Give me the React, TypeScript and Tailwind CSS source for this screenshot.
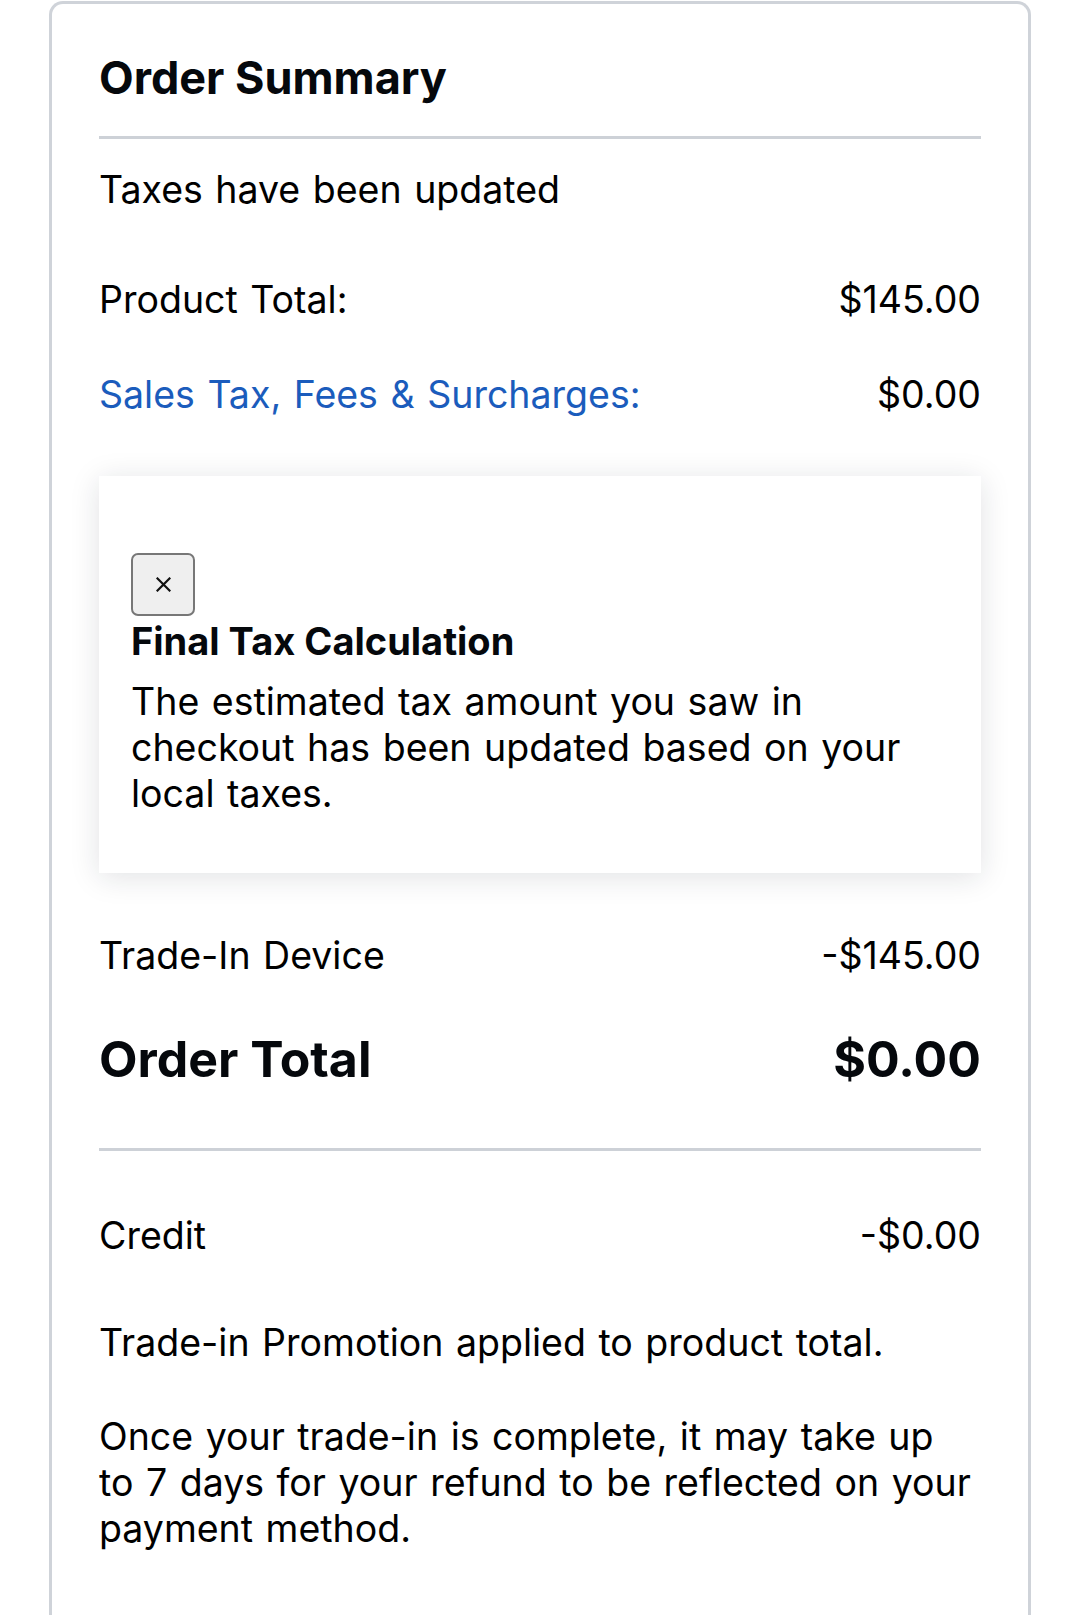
import { ReactNode } from "react";

interface RowProps {
  label: ReactNode;
  value: string;
  className?: string;
}

function Row({ label, value, className = "" }: RowProps) {
  return (
    <div className={`flex items-center justify-between text-[37.5px] leading-[46px] text-black ${className}`}>
      <span>{label}</span>
      <span>{value}</span>
    </div>
  );
}

function CloseIcon() {
  return (
    <svg width="15" height="15" viewBox="0 0 15 15" fill="none">
      <path d="M1.5 1.5L13.5 13.5M13.5 1.5L1.5 13.5" stroke="#111" strokeWidth="2.2" strokeLinecap="square" />
    </svg>
  );
}

export default function App() {
  return (
    <div className="min-h-screen bg-white font-['Inter',sans-serif] overflow-hidden">
      <div className="ml-[49px] mt-[1px] w-[982px] rounded-t-[14px] border-[3px] border-b-0 border-[#cfd3d9] bg-white px-[47px] pt-[46px] pb-[120px] [word-spacing:2px]">
        <h2 className="text-[45px] leading-[56px] font-bold text-[#05080c] [word-spacing:0px]">Order Summary</h2>
        <div className="mt-[30px] h-[3px] bg-[#cdd1d7]" />

        <p className="mt-[28px] text-[37.5px] leading-[46px] text-black">Taxes have been updated</p>

        <Row className="mt-[64px]" label="Product Total:" value="$145.00" />
        <Row
          className="mt-[49px]"
          label={<span className="text-[#1b5cbc]">Sales Tax, Fees &amp; Surcharges:</span>}
          value="$0.00"
        />

        <div className="mt-[58px] bg-white pl-[32px] pr-[48px] pt-[77px] pb-[56px] shadow-[0_4px_28px_rgba(20,30,50,0.13)]">
          <button className="flex h-[63px] w-[64px] items-center justify-center rounded-[7px] border-2 border-[#777] bg-[#efefef]">
            <CloseIcon />
          </button>
          <h3 className="mt-[3px] text-[38px] leading-[44px] font-bold text-[#05080c] [word-spacing:0px]">Final Tax Calculation</h3>
          <p className="mt-[16px] text-[37.5px] leading-[46px] text-black">
            The estimated tax amount you saw in checkout has been updated based on your local taxes.
          </p>
        </div>

        <Row className="mt-[60px]" label="Trade-In Device" value="-$145.00" />

        <div className="mt-[50px] flex items-center justify-between text-[50px] leading-[60px] font-bold text-[#05080c] [word-spacing:0px]">
          <span>Order Total</span>
          <span>$0.00</span>
        </div>

        <div className="mt-[59px] h-[3px] bg-[#cdd1d7]" />

        <Row className="mt-[62px]" label="Credit" value="-$0.00" />

        <p className="mt-[61px] text-[37.5px] leading-[46px] text-black">Trade-in Promotion applied to product total.</p>
        <p className="mt-[48px] text-[37.5px] leading-[46px] text-black">
          Once your trade-in is complete, it may take up
          <br />
          to 7 days for your refund to be reflected on your
          <br />
          payment method.
        </p>
      </div>
    </div>
  );
}
